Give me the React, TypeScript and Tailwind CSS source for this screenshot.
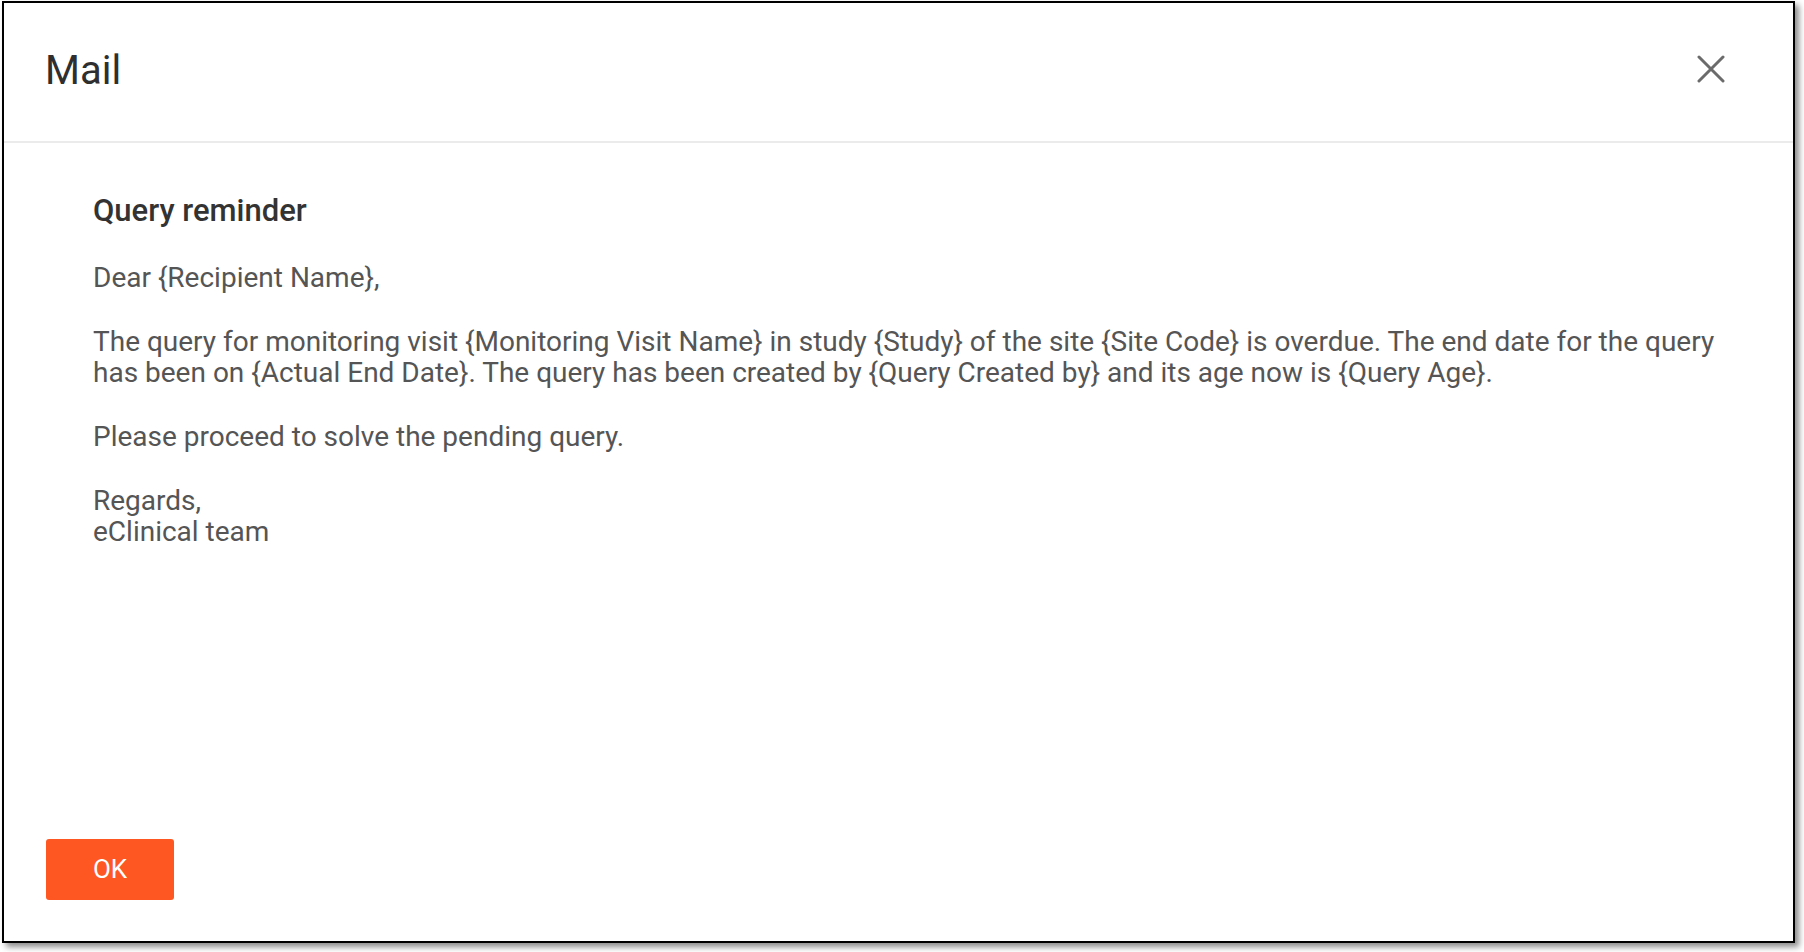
import React from "react";

function CloseIcon() {
    return (
        <svg width="28" height="28" viewBox="0 0 28 28" fill="none">
            <path d="M2 2L26 26M26 2L2 26" stroke="#6b6b6b" strokeWidth="3" strokeLinecap="round" />
        </svg>
    );
}

const paragraphs = [
    "Dear {Recipient Name},",
    "The query for monitoring visit {Monitoring Visit Name} in study {Study} of the site {Site Code} is overdue. The end date for the query has been on {Actual End Date}. The query has been created by {Query Created by} and its age now is {Query Age}.",
    "Please proceed to solve the pending query.",
];

export default function App() {
    return (
        <div className="w-[1804px] h-[952px] bg-white font-['Roboto',sans-serif]">
            <div className="ml-[2px] mt-[1px] w-[1793px] h-[942px] border-2 border-black bg-white flex flex-col shadow-[4px_4px_6px_rgba(0,0,0,0.45)]">
                <div className="h-[140px] border-b-2 border-[#ebebeb] flex justify-between pl-[41px] pr-[68px]">
                    <h1 className="mt-[48px] text-[40px] leading-[40px] text-[#2f2f2f]">Mail</h1>
                    <button className="mt-[52px] h-[28px] w-[28px]">
                        <CloseIcon />
                    </button>
                </div>

                <div className="flex-1 pl-[89px] pr-[40px] pt-[50px]">
                    <h2 className="text-[31px] leading-[36px] font-medium text-[#333333] mb-[33px]">Query reminder</h2>
                    {paragraphs.map((text, index) => (
                        <p key={index} className="text-[28px] leading-[31px] text-[#555555] mb-[33px]">
                            {text}
                        </p>
                    ))}
                    <p className="text-[28px] leading-[31px] text-[#555555]">
                        Regards,
                        <br />
                        eClinical team
                    </p>
                </div>

                <div className="pl-[42px] pb-[41px]">
                    <button className="w-[128px] h-[61px] rounded-[3px] bg-[#ff5722] text-white text-[26px]">OK</button>
                </div>
            </div>
        </div>
    );
}
